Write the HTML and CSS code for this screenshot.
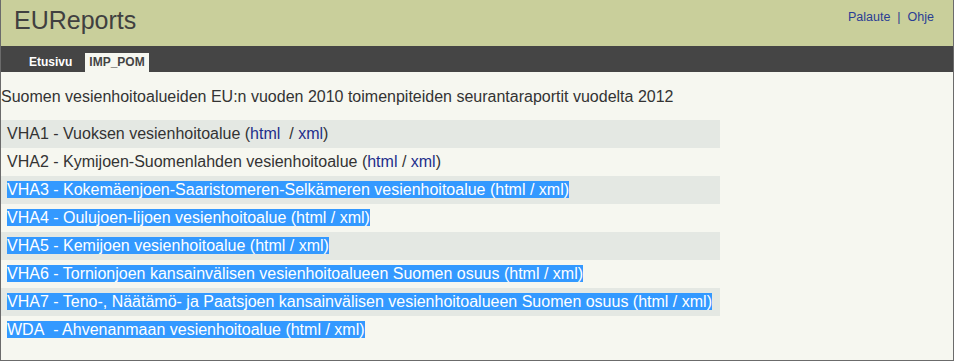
FILE: index.html
```html
<!DOCTYPE html>
<html lang="fi">
<head>
<meta charset="utf-8">
<title>EUReports</title>
<link rel="stylesheet" href="styles.css">
</head>
<body>
<div class="page">
  <header class="header">
    <div class="brand">EUReports</div>
    <nav class="toplinks"><a href="#">Palaute</a><span class="sep">|</span><a href="#">Ohje</a></nav>
  </header>
  <nav class="tabs">
    <a class="tab" href="#">Etusivu</a>
    <a class="tab active" href="#">IMP_POM</a>
  </nav>
  <main class="content">
    <div class="title">Suomen vesienhoitoalueiden EU:n vuoden 2010 toimenpiteiden seurantaraportit vuodelta 2012</div>
    <ul class="list">
      <li class="row alt">VHA1 - Vuoksen vesienhoitoalue (<a href="#">html</a>&nbsp; / <a href="#">xml</a>)</li>
      <li class="row">VHA2 - Kymijoen-Suomenlahden vesienhoitoalue (<a href="#">html</a> / <a href="#">xml</a>)</li>
      <li class="row alt"><span class="sel">VHA3 - Kokemäenjoen-Saaristomeren-Selkämeren vesienhoitoalue (<a href="#">html</a> / <a href="#">xml</a>)</span></li>
      <li class="row"><span class="sel">VHA4 - Oulujoen-Iijoen vesienhoitoalue (<a href="#">html</a> / <a href="#">xml</a>)</span></li>
      <li class="row alt"><span class="sel">VHA5 - Kemijoen vesienhoitoalue (<a href="#">html</a> / <a href="#">xml</a>)</span></li>
      <li class="row"><span class="sel">VHA6 - Tornionjoen kansainvälisen vesienhoitoalueen Suomen osuus (<a href="#">html</a> / <a href="#">xml</a>)</span></li>
      <li class="row alt"><span class="sel">VHA7 - Teno-, Näätämö- ja Paatsjoen kansainvälisen vesienhoitoalueen Suomen osuus (<a href="#">html</a> / <a href="#">xml</a>)</span></li>
      <li class="row"><span class="sel">WDA&nbsp; - Ahvenanmaan vesienhoitoalue (<a href="#">html</a> / <a href="#">xml</a>)</span></li>
    </ul>
  </main>
</div>
</body>
</html>
```
FILE: styles.css
```css
html, body {
  margin: 0;
  padding: 0;
  background: #ffffff;
}
body {
  font-family: "Liberation Sans", Arial, sans-serif;
  color: #333333;
}
a {
  text-decoration: none;
}
.page {
  width: 952px;
  height: 360px;
  border: 1px solid #6b6b6b;
  border-top: none;
  background: #f6f7f0;
  display: flex;
  flex-direction: column;
}
.header {
  height: 46px;
  background: #c9cf9b;
  display: flex;
  justify-content: space-between;
  align-items: flex-start;
  box-sizing: border-box;
}
.brand {
  font-size: 25px;
  color: #404040;
  padding: 6px 0 0 13px;
  line-height: normal;
}
.toplinks {
  font-size: 12.5px;
  padding: 10px 19px 0 0;
  color: #2f3f8f;
}
.toplinks a {
  color: #2a3d95;
}
.sep {
  margin: 0 7px;
}
.tabs {
  height: 26px;
  background: #454545;
  display: flex;
  align-items: flex-end;
  gap: 9px;
  padding-left: 24px;
  box-sizing: border-box;
}
.tab {
  font-size: 12px;
  font-weight: bold;
  color: #ffffff;
  height: 19px;
  line-height: 19px;
  padding: 0 4px;
}
.tab.active {
  background: #f6f7f0;
  color: #444444;
}
.content {
  flex: 1;
  padding-top: 16px;
}
.title {
  font-size: 16px;
  line-height: 18px;
  margin-bottom: 14px;
  color: #333333;
}
.list {
  list-style: none;
  margin: 0;
  padding: 0;
  width: 719px;
}
.row {
  height: 28px;
  box-sizing: border-box;
  padding: 5px 0 5px 6px;
  font-size: 16px;
  line-height: 18px;
  color: #333333;
}
.row.alt {
  background: #e4e8e3;
}
.row a {
  color: #1e2f8c;
}
.sel {
  background: #3399ff;
  color: #ffffff;
}
.sel a {
  color: #ffffff;
}
```
